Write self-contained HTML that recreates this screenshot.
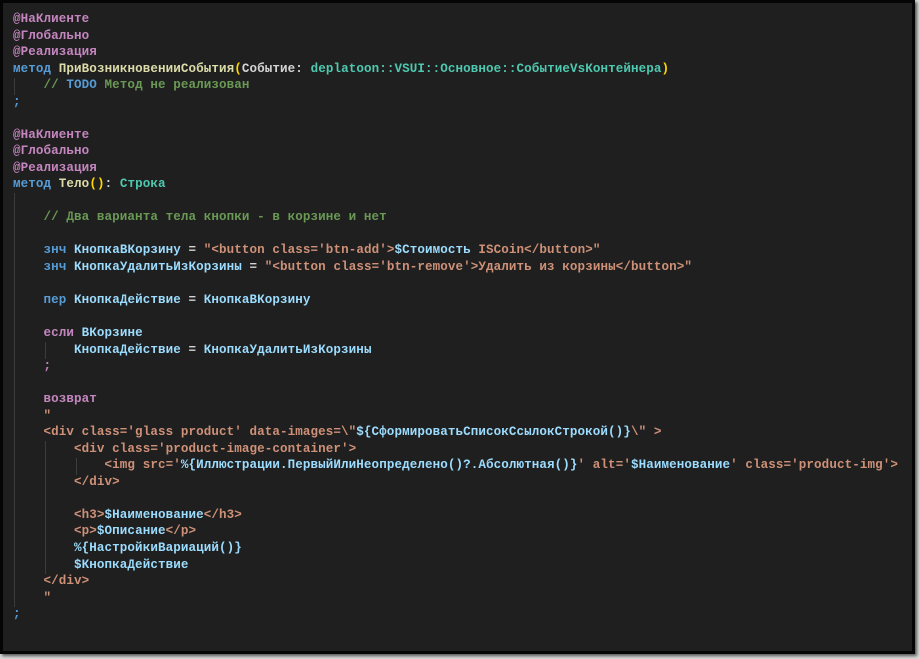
<!DOCTYPE html>
<html><head><meta charset="utf-8"><style>
html,body{margin:0;padding:0;width:920px;height:659px;background:#d9d9d9;overflow:hidden}
.f{position:absolute;left:0;top:0;width:909px;height:648px;border:3px solid #050505;background:#1f1f1f;box-shadow:2px 2px 3px #555}
pre{position:absolute;left:10px;top:8px;margin:0;font-family:"Liberation Mono","Noto Sans CJK SC",monospace;font-size:12.57px;letter-spacing:0.09px;line-height:16.53px;color:#d4d4d4;font-weight:bold}
.a{color:#c586c0}.k{color:#569cd6}.fn{color:#dcdcaa}.t{color:#4ec9b0}.v{color:#9cdcfe}.s{color:#ce9178}.c{color:#6a9955}.b{color:#ffd700}.p{color:#c586c0}
.g{position:absolute;width:1px;background:#3c3c3c}
</style></head><body><div class="f">
<div class="g" style="left:11px;top:75px;height:17px"></div>
<div class="g" style="left:11px;top:190px;height:414px"></div>
<div class="g" style="left:42px;top:339px;height:17px"></div>
<div class="g" style="left:42px;top:438px;height:133px"></div>
<div class="g" style="left:73px;top:455px;height:17px"></div>
<pre><span class="a">@НаКлиенте</span>
<span class="a">@Глобально</span>
<span class="a">@Реализация</span>
<span class="k">метод</span> <span class="fn">ПриВозникновенииСобытия</span><span class="b">(</span>Событие: <span class="t">deplatoon::VSUI::Основное::СобытиеVsКонтейнера</span><span class="b">)</span>
    <span class="c">// </span><span class="k">TODO</span><span class="c"> Метод не реализован</span>
<span class="k">;</span>

<span class="a">@НаКлиенте</span>
<span class="a">@Глобально</span>
<span class="a">@Реализация</span>
<span class="k">метод</span> <span class="fn">Тело</span><span class="b">()</span>: <span class="t">Строка</span>

    <span class="c">// Два варианта тела кнопки - в корзине и нет</span>

    <span class="k">знч</span> <span class="v">КнопкаВКорзину</span> = <span class="s">"&lt;button class='btn-add'&gt;</span><span class="v">$Стоимость</span><span class="s"> ISCoin&lt;/button&gt;"</span>
    <span class="k">знч</span> <span class="v">КнопкаУдалитьИзКорзины</span> = <span class="s">"&lt;button class='btn-remove'&gt;Удалить из корзины&lt;/button&gt;"</span>

    <span class="k">пер</span> <span class="v">КнопкаДействие</span> = <span class="v">КнопкаВКорзину</span>

    <span class="p">если</span> <span class="v">ВКорзине</span>
        <span class="v">КнопкаДействие</span> = <span class="v">КнопкаУдалитьИзКорзины</span>
    <span class="p">;</span>

    <span class="p">возврат</span>
    <span class="s">"</span>
    <span class="s">&lt;div class='glass product' data-images=\"</span><span class="v">${СформироватьСписокСсылокСтрокой()}</span><span class="s">\" &gt;</span>
        <span class="s">&lt;div class='product-image-container'&gt;</span>
            <span class="s">&lt;img src='</span><span class="v">%{Иллюстрации.ПервыйИлиНеопределено()?.Абсолютная()}</span><span class="s">' alt='</span><span class="v">$Наименование</span><span class="s">' class='product-img'&gt;</span>
        <span class="s">&lt;/div&gt;</span>

        <span class="s">&lt;h3&gt;</span><span class="v">$Наименование</span><span class="s">&lt;/h3&gt;</span>
        <span class="s">&lt;p&gt;</span><span class="v">$Описание</span><span class="s">&lt;/p&gt;</span>
        <span class="v">%{НастройкиВариаций()}</span>
        <span class="v">$КнопкаДействие</span>
    <span class="s">&lt;/div&gt;</span>
    <span class="s">"</span>
<span class="k">;</span></pre>
</div></body></html>
